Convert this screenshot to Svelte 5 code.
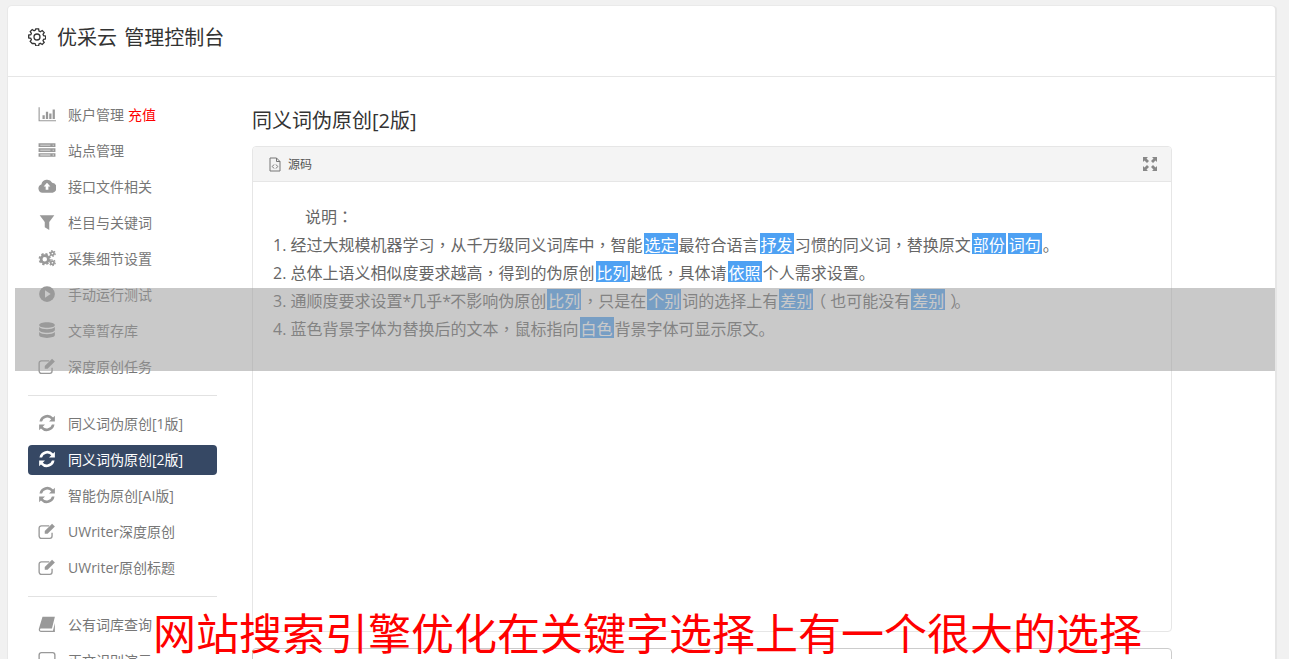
<script>
  const ic = {
    chart: 'M0.500 2h1v11.500H16v1H0.500z M4 9h2v3.500H4z M7 6h2v6.500H7z M10 7.500h2v5h-2z M13 4h2v8.500h-2z',
    server: 'M0.500 2h15v3.300H0.500z M0.500 6.400h15v3.300H0.500z M0.500 10.800h15v3.300H0.500z',
    cloud: 'M4 14a3.800 3.800 0 0 1-1-7.400A5.200 5.200 0 0 1 12.600 5 4.600 4.600 0 0 1 13 14z',
    filter: 'M1.500 2h13L10 8v7l-4-2.400V8z',
    play: 'M8 1a7 7 0 1 0 0 14A7 7 0 0 0 8 1z',
    db: 'M8 1c4 0 7 1 7 2.500S12 6 8 6 1 5 1 3.500 4 1 8 1z M1 5.300C2.200 6.700 5 7.300 8 7.300s5.800-.6 7-2V8c0 1.400-3 2.500-7 2.500S1 9.400 1 8z M1 9.800c1.200 1.400 4 2 7 2s5.800-.6 7-2v2.700c0 1.500-3 2.500-7 2.500s-7-1-7-2.500z'
  };
  const group1 = [
    ['chart', '账户管理', true],
    ['server', '站点管理'],
    ['cloud', '接口文件相关'],
    ['filter', '栏目与关键词'],
    ['cogs', '采集细节设置'],
    ['play', '手动运行测试'],
    ['db', '文章暂存库'],
    ['edit', '深度原创任务']
  ];
  const group2 = [
    ['refresh', '同义词伪原创[1版]'],
    ['refresh', '同义词伪原创[2版]', false, true],
    ['refresh', '智能伪原创[AI版]'],
    ['edit', 'UWriter深度原创'],
    ['edit', 'UWriter原创标题']
  ];
  const group3 = [
    ['book', '公有词库查询'],
    ['square', '正文识别演示']
  ];
  const groups = [group1, group2, group3];
</script>

{#snippet icon(name)}
  <svg class="nav-icon" viewBox="0 0 16 16" aria-hidden="true">
    {#if name === 'edit'}
      <path class="line" d="M12.500 9.500v3a2 2 0 0 1-2 2h-7.500a2 2 0 0 1-2-2v-7a2 2 0 0 1 2-2h7" />
      <path d="M6 8l6.500-6.500 2.500 2.500-6.500 6.500H6z" />
    {:else if name === 'refresh'}
      <path d="M13.400 3.100A7 7 0 0 0 1.300 6.600h2.300a4.800 4.800 0 0 1 8.200-1.900L9.800 6.700H15V1.500z M2.600 12.900a7 7 0 0 0 12.100-3.500h-2.300a4.800 4.800 0 0 1-8.200 1.900l2-2H1v5.200z" />
    {:else if name === 'cogs'}
      <circle class="ring" cx="6" cy="9" r="3.200" />
      <circle class="dash" cx="6" cy="9" r="4.700" />
      <circle class="ring2" cx="12.800" cy="4" r="1.500" />
      <circle class="dash2" cx="12.800" cy="4" r="2.600" />
      <circle class="ring2" cx="12.800" cy="12.200" r="1.500" />
      <circle class="dash2" cx="12.800" cy="12.200" r="2.600" />
    {:else if name === 'book'}
      <path d="M4 1.500h11l-2.600 10.500H2.800c-.7 0-1 .5-1 1s.4 1 1 1h10.500l1.700-7v8H2.500C1 15 .5 13.800.7 12.500z" />
    {:else if name === 'square'}
      <rect class="line" x="1" y="1.500" width="14" height="13" rx="2" />
    {:else}
      <path d={ic[name]} />
      {#if name === 'play'}<path class="cut" d="M6.200 4.700l5 3.300-5 3.300z" />{/if}
      {#if name === 'cloud'}<path class="cut" d="M8 5.200l3 3.200H9.200v3H6.800v-3H5z" />{/if}
      {#if name === 'server'}
        <path class="slot" d="M2 3.300h9v.8H2z M13 3.300h1.200v.8H13z M2 7.700h9v.8H2z M13 7.700h1.200v.8H13z M2 12.100h9v.8H2z M13 12.100h1.200v.8H13z" />
      {/if}
    {/if}
  </svg>
{/snippet}

<div class="card">
  <header class="top">
    <svg class="gear" viewBox="0 0 18 18" aria-hidden="true">
      <path d="M7.600 1h2.800l.4 2.200 1.300.6 1.900-1.200 2 2-1.200 1.900.6 1.300 2.100.4v2.800l-2.100.4-.6 1.300 1.200 1.900-2 2-1.900-1.200-1.300.6-.4 2.100H7.600l-.4-2.100-1.300-.6L4 15.600l-2-2 1.200-1.900-.6-1.300L.5 10V7.200l2.100-.4.600-1.300L2 3.600l2-2 1.900 1.200 1.300-.6z" transform="translate(.2 -.1)" />
      <circle cx="9" cy="9" r="3" />
    </svg>
    <span>优采云 管理控制台</span>
  </header>

  <div class="body">
    <nav class="side">
      {#each groups as g, i}
        {#if i > 0}<div class="rule"></div>{/if}
        {#each g as [name, label, recharge, active]}
          <div class="item" class:active>
            {@render icon(name)}
            <span>{label}</span>
            {#if recharge}<span class="red">充值</span>{/if}
          </div>
        {/each}
      {/each}
    </nav>

    <main class="main">
      <h2>同义词伪原创[2版]</h2>
      <section class="panel">
        <div class="panel-head">
          <svg class="code" viewBox="0 0 12 15" aria-hidden="true">
            <path d="M1 1h6.500L11 4.500V14H1z" />
            <path d="M7.500 1v3.500H11" />
            <path d="M5 7.500L3.300 9.500 5 11.500M7 7.500l1.700 2L7 11.500" />
          </svg>
          <span>源码</span>
          <svg class="expand" viewBox="0 0 14 14" aria-hidden="true">
            <path d="M0 0h5L3.500 1.500 6 4 4 6 1.500 3.500 0 5z M14 0v5l-1.500-1.500L10 6 8 4l2.500-2.500L9 0z M0 14V9l1.500 1.500L4 8l2 2-2.500 2.500L5 14z M14 14H9l1.500-1.500L8 10l2-2 2.500 2.500L14 9z" />
          </svg>
        </div>
        <div class="text">
          <p class="lead">说明<span class="p">：</span></p>
          <p>1. 经过大规模机器学习<span class="p">，</span>从千万级同义词库中<span class="p">，</span>智能<b>选定</b>最符合语言<b>抒发</b>习惯的同义词<span class="p">，</span>替换原文<b>部份</b><b>词句</b>。</p>
          <p>2. 总体上语义相似度要求越高<span class="p">，</span>得到的伪原创<b>比列</b>越低<span class="p">，</span>具体请<b>依照</b>个人需求设置。</p>
          <p>3. 通顺度要求设置<span class="a">*</span>几乎<span class="a">*</span>不影响伪原创<b>比列</b><span class="p">，</span>只是在<b>个别</b>词的选择上有<b>差别</b><span class="p open">（</span>也可能没有<b>差别</b><span class="p close">）</span>。</p>
          <p>4. 蓝色背景字体为替换后的文本<span class="p">，</span>鼠标指向<b>白色</b>背景字体可显示原文。</p>
        </div>
      </section>
      <section class="panel second"></section>
    </main>
  </div>
</div>

<div class="band"></div>
<div class="caption">网站搜索引擎优化在关键字选择上有一个很大的选择</div>

<style>
  :global(html), :global(body) {
    margin: 0;
    height: 659px;
    overflow: hidden;
    background: #f1f1f1;
  }
  .card {
    margin: 6px 14px 0 8px;
    height: 653px;
    overflow: hidden;
    background: #fff;
    border-radius: 4px 4px 0 0;
    box-shadow: 2px 0 0 #e6e6e6, -1px 0 0 #e8e8e8, 0 -1px 0 #eaeaea;
    font-family: "Open Sans", "Noto Sans CJK SC", sans-serif;
    color: #666;
  }
  .top {
    height: 71px;
    box-sizing: border-box;
    border-bottom: 1px solid #e6e6e6;
    display: flex;
    align-items: center;
    padding: 0 0 9px 20px;
    gap: 11px;
    font-size: 20px;
    word-spacing: 2px;
    color: #333;
  }
  .gear {
    width: 18px;
    height: 18px;
    fill: none;
    stroke: #333;
    stroke-width: 1.300;
  }
  .body {
    display: flex;
    padding: 23px 0 0 20px;
  }
  .side {
    width: 189px;
    flex: none;
    font-size: 14px;
  }
  .item {
    height: 30px;
    box-sizing: border-box;
    margin-bottom: 6px;
    border-radius: 4px;
    display: flex;
    align-items: center;
    padding: 0 0 2px 10px;
    color: #777;
  }
  .item span { white-space: nowrap; }
  .nav-icon {
    width: 18px;
    height: 18px;
    flex: none;
    margin-right: 12px;
    fill: #999;
  }
  .nav-icon .line {
    fill: none;
    stroke: #999;
    stroke-width: 1.200;
  }
  .nav-icon .cut { fill: #fff; }
  .nav-icon .slot { fill: #eee; }
  .nav-icon .ring, .nav-icon .ring2 { fill: none; stroke: #999; }
  .nav-icon .ring { stroke-width: 2.400; }
  .nav-icon .ring2 { stroke-width: 1.500; }
  .nav-icon .dash { fill: none; stroke: #999; stroke-width: 1.600; stroke-dasharray: 2 1.700; }
  .nav-icon .dash2 { fill: none; stroke: #999; stroke-width: 1; stroke-dasharray: 1.300 1.400; }
  .red { color: #f00; margin-left: 4px; }
  .active {
    background: #364864;
    color: #fff;
  }
  .active .nav-icon { fill: #fff; }
  .rule {
    height: 1px;
    background: #e2e2e2;
    margin: 13px 0 13px;
  }
  .main {
    width: 920px;
    margin-left: 35px;
  }
  h2 {
    margin: 0;
    height: 46px;
    font-size: 20px;
    line-height: 41px;
    font-weight: 400;
    color: #333;
  }
  .panel {
    height: 486px;
    border: 1px solid #e6e6e6;
    border-radius: 4px;
    box-sizing: border-box;
  }
  .panel.second {
    margin-top: 16px;
    border-color: #ccc;
  }
  .panel-head {
    height: 35px;
    box-sizing: border-box;
    background: #f4f4f4;
    border-bottom: 1px solid #e6e6e6;
    border-radius: 4px 4px 0 0;
    display: flex;
    align-items: center;
    padding: 0 14px 0 16px;
    font-size: 12px;
    color: #555;
  }
  .code {
    width: 12px;
    height: 15px;
    margin-right: 7px;
    fill: none;
    stroke: #777;
    stroke-width: 1;
  }
  .expand {
    width: 14px;
    height: 14px;
    margin-left: auto;
    fill: #888;
  }
  .text {
    padding: 20px 0 0 20px;
    font-size: 16px;
    line-height: 28px;
    color: #666;
  }
  .text p { margin: 0; height: 28px; white-space: nowrap; }
  .text .lead { padding-left: 32px; }
  .text .p { font-family: "Noto Sans CJK TC", sans-serif; }
  .text .open { position: relative; left: -4px; }
  .text .close { margin-left: 4px; letter-spacing: -4px; }
  .text .a { letter-spacing: -1px; }
  .text b {
    display: inline-block;
    height: 21px;
    line-height: 25px;
    font-weight: 400;
    color: #fff;
    background: #4ea1f3;
    padding: 0 1px;
    margin: 0 1px;
  }
  .band {
    position: absolute;
    left: 15px;
    top: 288px;
    width: 1260px;
    height: 83px;
    background: rgba(155, 155, 155, 0.54);
  }
  .caption {
    position: absolute;
    left: 153px;
    top: 606px;
    font-family: "Noto Sans CJK SC", sans-serif;
    font-size: 43px;
    line-height: 50px;
    color: #f00;
    white-space: nowrap;
  }
</style>
